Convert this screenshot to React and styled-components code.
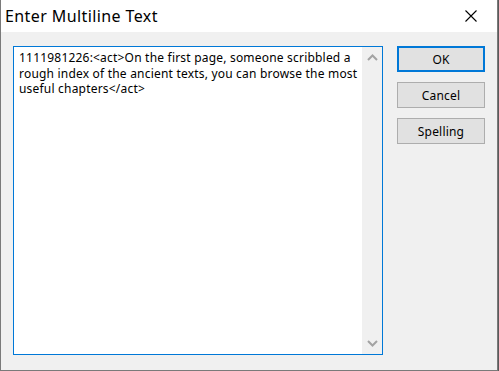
import React from 'react'
import styled, { createGlobalStyle } from 'styled-components'

const GlobalStyle = createGlobalStyle`
  html, body {
    margin: 0;
    padding: 0;
    background: #5a5a5a;
  }
  body {
    width: 499px;
    height: 371px;
    overflow: hidden;
  }
`

const Window = styled.div`
  width: 496px;
  height: 370px;
  border: 1px solid #7a7a7a;
  border-top: none;
  background: #f0f0f0;
  display: flex;
  flex-direction: column;
  font-family: 'Noto Sans', 'Open Sans', sans-serif;
`

const TitleBar = styled.div`
  height: 32px;
  background: #ffffff;
  display: flex;
  align-items: center;
  justify-content: space-between;
  padding: 0 0 0 4px;
`

const Title = styled.div`
  font-size: 16px;
  letter-spacing: 0.4px;
  color: #000;
  margin-top: -1px;
`

const CloseButton = styled.div`
  width: 46px;
  height: 32px;
  display: flex;
  align-items: center;
  justify-content: center;
  margin-right: 3px;
`

const Body = styled.div`
  flex: 1;
  display: flex;
  padding: 14px 12px 14px 12px;
  gap: 14px;
`

const Editor = styled.div`
  width: 368px;
  height: 307px;
  border: 1px solid #0078d7;
  background: #ffffff;
  display: flex;
`

const EditorText = styled.div`
  flex: 1;
  padding: 3px 5px;
  font-family: 'Noto Sans', sans-serif;
  font-size: 12px;
  letter-spacing: 0.2px;
  line-height: 15.5px;
  color: #000;
  white-space: nowrap;
`

const ScrollBar = styled.div`
  width: 21px;
  background: #f0f0f0;
  display: flex;
  flex-direction: column;
  justify-content: space-between;
  align-items: center;
  padding: 7px 0;
`

const Buttons = styled.div`
  display: flex;
  flex-direction: column;
  gap: 10px;
`

const Button = styled.div`
  width: ${p => (p.$default ? '84px' : '86px')};
  height: ${p => (p.$default ? '22px' : '24px')};
  border: ${p => (p.$default ? '2px solid #0078d7' : '1px solid #adadad')};
  box-sizing: content-box;
  background: #e1e1e1;
  display: flex;
  align-items: center;
  justify-content: center;
  font-size: 12px;
  letter-spacing: 0.2px;
  color: #000;
`

const Chevron = ({ up }) => (
  <svg width="11" height="7" viewBox="0 0 11 7">
    <path
      d={up ? 'M1 6 L5.5 1.5 L10 6' : 'M1 1 L5.5 5.5 L10 1'}
      stroke="#a3a3a3"
      strokeWidth="2"
      fill="none"
    />
  </svg>
)

const App = () => {
  return (
    <>
      <GlobalStyle />
      <Window>
        <TitleBar>
          <Title>Enter Multiline Text</Title>
          <CloseButton>
            <svg width="12" height="12" viewBox="0 0 12 12">
              <path d="M0.5 0.5 L11.5 11.5 M11.5 0.5 L0.5 11.5" stroke="#000" strokeWidth="1.1" />
            </svg>
          </CloseButton>
        </TitleBar>
        <Body>
          <Editor>
            <EditorText>
              1111981226:&lt;act&gt;On the first page, someone scribbled a
              <br />
              rough index of the ancient texts, you can browse the most
              <br />
              useful chapters&lt;/act&gt;
            </EditorText>
            <ScrollBar>
              <Chevron up />
              <Chevron />
            </ScrollBar>
          </Editor>
          <Buttons>
            <Button $default>OK</Button>
            <Button>Cancel</Button>
            <Button>Spelling</Button>
          </Buttons>
        </Body>
      </Window>
    </>
  )
}

export default App
